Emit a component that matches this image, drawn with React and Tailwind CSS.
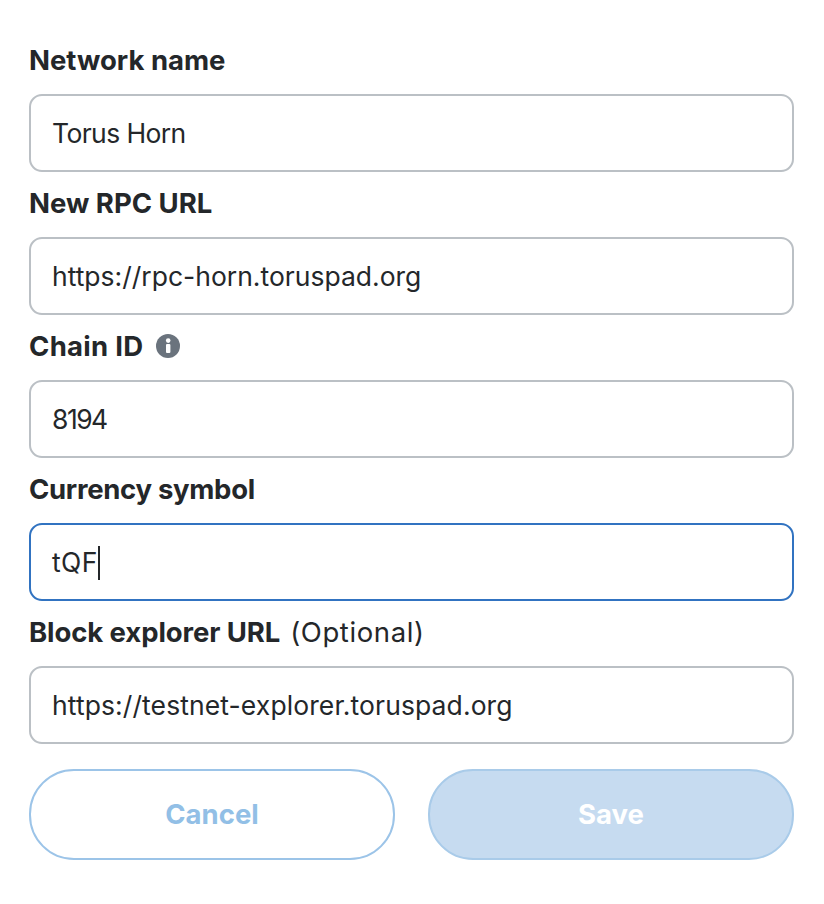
import React from 'react'

const font = "font-['Inter','Noto_Sans',sans-serif]"

function Label({ children }) {
  return (
    <div className="h-[65px] pb-[1px] flex items-center text-[#24272a] text-[27.5px]">
      {children}
    </div>
  )
}

function Field({ value, focused, className = '' }) {
  return (
    <div
      className={`h-[78px] px-[21px] pt-[2px] flex items-center bg-white rounded-[13px] border-2 text-[26.5px] text-[#24272a] ${
        focused ? 'border-[#3173c1]' : 'border-[#bbc0c5]'
      }`}
    >
      <span className={className}>{value}</span>
      {focused && <span className="w-[2px] h-[34px] bg-[#24272a]" />}
    </div>
  )
}

function InfoIcon() {
  return (
    <svg width="24" height="24" viewBox="0 0 24 24" className="ml-[12px] mb-[3px]">
      <circle cx="12" cy="12" r="12" fill="#6a737d" />
      <rect x="10" y="10" width="4.4" height="9" rx="1" fill="#fff" />
      <circle cx="12.2" cy="6.6" r="2.3" fill="#fff" />
    </svg>
  )
}

export default function App() {
  return (
    <div className={`w-[824px] h-[904px] bg-white pt-[29px] pl-[29px] pr-[30px] ${font}`}>
      <Label>
        <span className="font-bold">Network name</span>
      </Label>
      <Field value="Torus Horn" className="tracking-[-0.6px]" />

      <Label>
        <span className="font-bold">New RPC URL</span>
      </Label>
      <Field value="https://rpc-horn.toruspad.org" />

      <Label>
        <span className="font-bold tracking-[0.3px]">Chain ID</span>
        <InfoIcon />
      </Label>
      <Field value="8194" className="tracking-[-1.5px]" />

      <Label>
        <span className="font-bold tracking-[-0.3px]">Currency symbol</span>
      </Label>
      <Field value="tQF" focused className="tracking-[0.4px]" />

      <Label>
        <span className="font-bold tracking-[-0.1px]">Block explorer URL</span>
        <span className="ml-[10px] tracking-[0.6px]">(Optional)</span>
      </Label>
      <Field value="https://testnet-explorer.toruspad.org" className="tracking-[0.1px]" />

      <div className="flex gap-[33px] mt-[25px]">
        <button className="flex-1 h-[91px] rounded-[45px] border-2 border-[#9cc4e8] bg-white text-[#92bfe6] text-[27.5px] font-bold">
          Cancel
        </button>
        <button className="flex-1 h-[91px] rounded-[45px] border-2 border-[#a9cbe9] bg-[#c6dbf0] text-white text-[27.5px] font-bold">
          Save
        </button>
      </div>
    </div>
  )
}
